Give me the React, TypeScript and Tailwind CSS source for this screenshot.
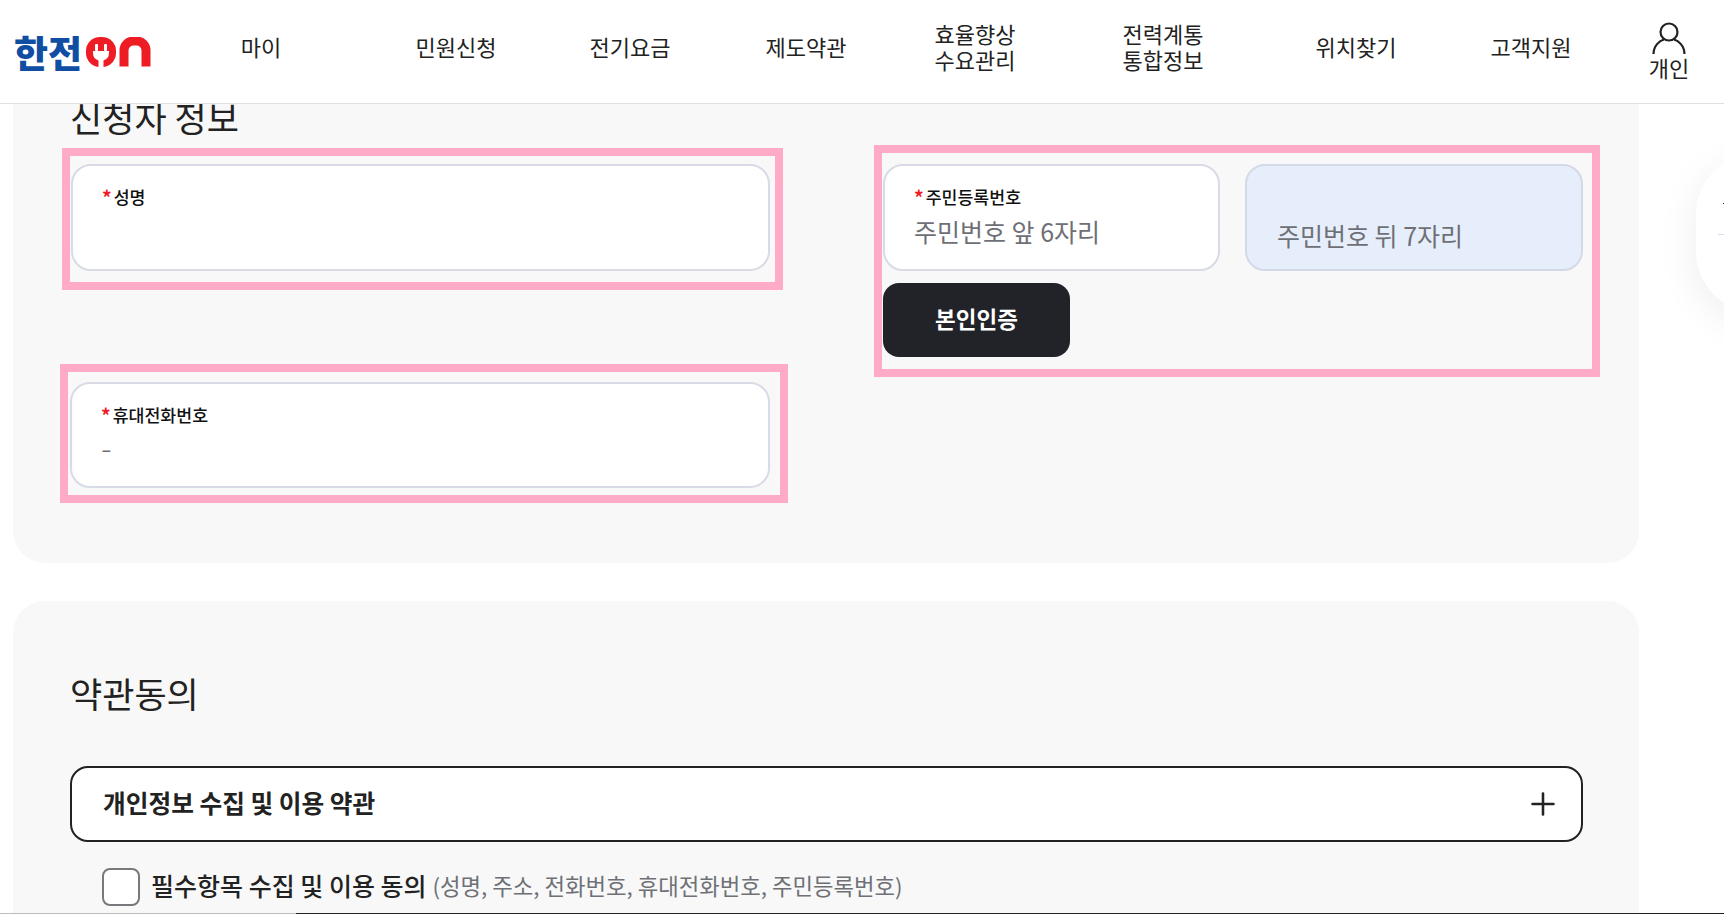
import { Plus } from 'lucide-react';

const fontStack = { fontFamily: '"Noto Sans CJK KR", "Noto Sans", sans-serif' };

const navItems = [
  { label: '마이', width: 'w-[194px]' },
  { label: '민원신청', width: 'w-[196px]' },
  { label: '전기요금', width: 'w-[152px]' },
  { label: '제도약관', width: 'w-[200px]' },
  { label: '효율향상\n수요관리', width: 'w-[138px]' },
  { label: '전력계통\n통합정보', width: 'w-[238px]' },
  { label: '위치찾기', width: 'w-[148px]' },
  { label: '고객지원', width: 'w-[202px]' },
];

function Logo() {
  return (
    <div className="flex items-center h-[30px]">
      <span className="text-[37px] leading-[30px] font-black text-[#0f4ea3]">한전</span>
      <svg width="67" height="30" viewBox="0 0 67 30" className="ml-[4px]">
        <rect x="0" y="0" width="30" height="30" rx="14" fill="#ee1c25" />
        <rect x="9" y="7" width="3" height="7" rx="1" fill="#fff" />
        <rect x="18" y="7" width="3" height="7" rx="1" fill="#fff" />
        <path d="M7 14h16v2a8 8 0 0 1-5.500 7.500V30h-5v-6.500A8 8 0 0 1 7 16z" fill="#fff" />
        <path d="M38 30V14a9.500 9.500 0 0 1 9.500-9.500h3A9.500 9.500 0 0 1 60 14v16" transform="translate(0 -0.500)" fill="none" stroke="#ee1c25" strokeWidth="9" />
      </svg>
    </div>
  );
}

function Header() {
  return (
    <header className="flex h-[104px] shrink-0 items-center border-b border-[#dfe0e4] bg-white">
      <div className="w-[164px] pl-[14px] shrink-0">
        <Logo />
      </div>
      {navItems.map((item) => (
        <div key={item.label} className={`${item.width} shrink-0 -mt-[12px] whitespace-pre-line text-center text-[22px] leading-[26px] text-[#222]`}>
          {item.label}
        </div>
      ))}
      <div className="flex w-[74px] -mt-[3px] flex-col items-center">
        <svg width="34" height="32" viewBox="0 0 34 32" fill="none" stroke="#222" strokeWidth="2.200">
          <circle cx="17" cy="10" r="8.500" />
          <path d="M1.500 32c0-8 6-13.500 10.500-14.500M32.500 32c0-8-6-13.500-10.500-14.500" />
        </svg>
        <span className="mt-[1px] text-[22px] leading-[24px] text-[#222]">개인</span>
      </div>
    </header>
  );
}

function Required({ children }: { children: string }) {
  return (
    <div className="flex items-center text-[17.300px] leading-[24px] font-medium text-[#111]">
      <span className="mr-[2px] text-[19px] text-[#ee1c25] font-bold">*</span>
      {children}
    </div>
  );
}

export default function App() {
  return (
    <div style={fontStack} className="relative flex h-[914px] flex-col overflow-hidden bg-white">
      <Header />

      <main className="flex-1 overflow-hidden">
        <section className="ml-[13px] -mt-[60px] flex w-[1626px] flex-col rounded-[32px] bg-[#f8f8f8] pb-[60px] pl-[49px]">
          <h2 className="mt-[48px] pl-[8px] text-[35px] leading-[50px] font-normal text-[#222]">신청자 정보</h2>
          <div className="mt-[6px] flex">
            <div className="flex w-[812px] flex-col">
              <div className="h-[142px] w-[721px] border-8 border-[#ffabc8] pl-px pr-[5px] pt-[8px]">
                <div className="h-[107px] rounded-[20px] border-2 border-[#d8dbe6] bg-white pl-[29px] pt-[19px]">
                  <Required>성명</Required>
                </div>
              </div>
              <div className="-ml-[2px] mt-[74px] h-[139px] w-[728px] border-8 border-[#ffabc8] pl-[2px] pr-[10px] pt-[10px]">
                <div className="h-[106px] rounded-[20px] border-2 border-[#d8dbe6] bg-white pl-[29px] pt-[19px]">
                  <Required>휴대전화번호</Required>
                  <div className="mt-[5px] text-[32px] leading-[28px] font-light text-[#6e7076]">-</div>
                </div>
              </div>
            </div>
            <div className="-mt-[3px] h-[232px] w-[726px] border-8 border-[#ffabc8] pl-px pt-[11px]">
              <div className="flex gap-[25px]">
                <div className="h-[107px] w-[337px] rounded-[20px] border-2 border-[#d8dbe6] bg-white pl-[29px] pt-[19px]">
                  <Required>주민등록번호</Required>
                  <div className="mt-[6px] text-[25px] leading-[32px] text-[#6e7076]">주민번호 앞 6자리</div>
                </div>
                <div className="h-[107px] w-[338px] rounded-[20px] border-2 border-[#d3d9e6] bg-[#e7eefb] pl-[30px] pt-[53px]">
                  <div className="text-[25px] leading-[32px] text-[#6e7076]">주민번호 뒤 7자리</div>
                </div>
              </div>
              <button className="mt-[12px] h-[74px] w-[187px] rounded-[16px] bg-[#212328] pb-[3px] text-[22.500px] font-bold text-white">본인인증</button>
            </div>
          </div>
        </section>

        <section className="ml-[13px] mt-[38px] h-[400px] w-[1626px] rounded-[32px] bg-[#f8f8f8] pl-[57px] pt-[67px]">
          <h2 className="text-[35px] leading-[50px] font-normal text-[#222]">약관동의</h2>
          <div className="mt-[48px] flex h-[76px] w-[1513px] items-center justify-between rounded-[18px] border-2 border-[#222] bg-white pl-[31px] pr-[20px]">
            <span className="pb-[3px] text-[24.700px] font-bold text-[#222]">개인정보 수집 및 이용 약관</span>
            <Plus size={36} strokeWidth={1.700} className="text-[#222]" />
          </div>
          <div className="mt-[25px] flex items-center pl-[32px]">
            <div className="size-[38px] rounded-[8px] border-2 border-[#77797d] bg-white" />
            <span className="ml-[11px] pb-[2px] text-[25px] font-medium text-[#222]">필수항목 수집 및 이용 동의</span>
            <span className="ml-[6px] pb-[2px] text-[22.300px] text-[#6e7076]">(성명, 주소, 전화번호, 휴대전화번호, 주민등록번호)</span>
          </div>
        </section>
      </main>

      {/* 화면 맨 아래 진행 표시줄 */}
      <div className="flex h-px shrink-0">
        <div className="w-[296px] bg-[#bdbdbd]" />
        <div className="flex-1 bg-[#222]" />
      </div>

      {/* 오른쪽 플로팅 패널 */}
      <div className="absolute left-[1696px] top-[154px] h-[158px] w-[200px] rounded-[60px] bg-white shadow-[0_10px_40px_rgba(0,0,0,0.07)]">
        <div className="absolute left-[27px] top-[49px] h-px w-px bg-[#333]" />
        <div className="absolute left-[22px] top-[80px] h-px w-[120px] bg-[#d3dcf0]" />
      </div>
    </div>
  );
}
